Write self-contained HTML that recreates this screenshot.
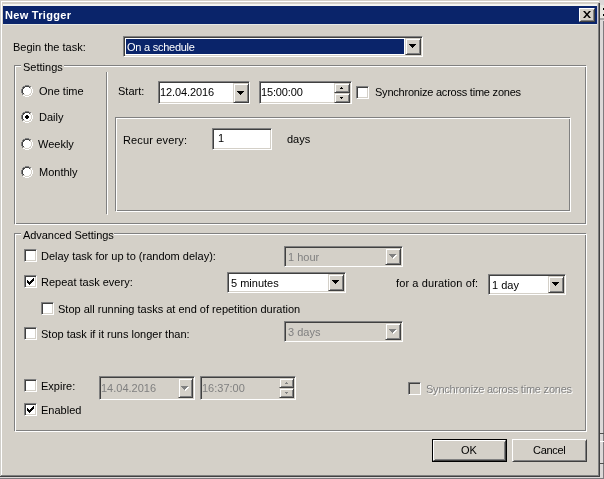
<!DOCTYPE html>
<html><head><meta charset="utf-8"><style>
html,body{margin:0;padding:0;width:604px;height:479px;overflow:hidden;background:#d4d0c8}
body>div,body>svg{position:absolute;box-sizing:border-box}
.t{font-family:"Liberation Sans",sans-serif;font-size:11px;line-height:13px;white-space:nowrap;color:#000;will-change:transform}
.sk{border:1px solid;border-color:#808080 #fff #fff #808080;box-shadow:inset 1px 1px 0 #404040,inset -1px -1px 0 #d4d0c8}
.rs{background:#d4d0c8;border:1px solid;border-color:#d4d0c8 #404040 #404040 #d4d0c8;box-shadow:inset 1px 1px 0 #fff,inset -1px -1px 0 #808080}
.bt{background:#d4d0c8;border:1px solid;border-color:#fff #404040 #404040 #fff;box-shadow:inset 1px 1px 0 #d4d0c8,inset -1px -1px 0 #808080}
</style></head><body>
<div style="left:0px;top:0px;width:604px;height:479px;background:#dcd8d8;"></div>
<div style="left:0px;top:0px;width:600px;height:477px;background:#d4d0c8;"></div>
<div style="left:0px;top:0px;width:600px;height:1px;background:#d4d0c8;"></div>
<div style="left:0px;top:1px;width:599px;height:1px;background:#ffffff;"></div>
<div style="left:0px;top:0px;width:1px;height:477px;background:#d0cec9;"></div>
<div style="left:1px;top:1px;width:1px;height:475px;background:#ffffff;"></div>
<div style="left:3px;top:4px;width:594px;height:2px;background:#f4f4f0;"></div>
<div style="left:598px;top:3px;width:1px;height:473px;background:#808080;"></div>
<div style="left:599px;top:3px;width:1px;height:474px;background:#404040;"></div>
<div style="left:597px;top:6px;width:1px;height:18px;background:#c8c8e0;"></div>
<div style="left:1px;top:475px;width:598px;height:1px;background:#808080;"></div>
<div style="left:0px;top:476px;width:600px;height:1px;background:#404040;"></div>
<div style="left:603px;top:21px;width:1px;height:458px;background:#7f7b7f;"></div>
<div style="left:0px;top:478px;width:604px;height:1px;background:#7f7b7f;"></div>
<div style="left:600px;top:5px;width:4px;height:13px;background:#e8e6e0;"></div>
<div style="left:600px;top:18px;width:4px;height:2px;background:#a8a8a8;"></div>
<div style="left:603px;top:8px;width:1px;height:2px;background:#000;"></div>
<div style="left:603px;top:14px;width:1px;height:2px;background:#000;"></div>
<div style="left:600px;top:433px;width:4px;height:1px;background:#505050;"></div>
<div style="left:600px;top:441px;width:4px;height:1px;background:#fff;"></div>
<div style="left:600px;top:463px;width:4px;height:1px;background:#505050;"></div>
<div style="left:3px;top:6px;width:594px;height:18px;background:#0a246a;"></div>
<div style="left:3px;top:24px;width:594px;height:1px;background:#e6e8e4;"></div>
<div class="t" style="left:5px;top:9px;color:#fff;font-weight:bold;letter-spacing:0.3px">New Trigger</div>
<div class="bt" style="left:579px;top:8px;width:16px;height:14px"></div>
<svg style="left:583px;top:11px" width="8" height="7"><path d="M0 0h2l2 2.5L6 0h2L5 3.5L8 7H6L4 4.5L2 7H0l3-3.5z" fill="#000"/></svg>
<div class="t" style="left:13px;top:41px;color:#000;">Begin the task:</div>
<div class="sk" style="left:123px;top:36px;width:300px;height:21px;background:#fff"></div>
<div class="rs" style="left:405px;top:38px;width:16px;height:17px"></div>
<svg style="left:409px;top:44px" width="7" height="4" shape-rendering="crispEdges"><rect x="0" y="0" width="7" height="1" fill="#000"/><rect x="1" y="1" width="5" height="1" fill="#000"/><rect x="2" y="2" width="3" height="1" fill="#000"/><rect x="3" y="3" width="1" height="1" fill="#000"/></svg>
<div style="left:126px;top:39px;width:278px;height:15px;background:#0a246a;"></div>
<div class="t" style="left:127px;top:41px;color:#fff;letter-spacing:-0.25px">On a schedule</div>
<div style="left:14px;top:65px;width:572px;height:159px;border:1px solid #808080;box-sizing:border-box"></div>
<div style="left:15px;top:66px;width:572px;height:159px;border:1px solid #ffffff;box-sizing:border-box"></div>
<div style="left:21px;top:62px;width:43px;height:6px;background:#d4d0c8;"></div>
<div class="t" style="left:23px;top:61px;color:#000;">Settings</div>
<div style="left:106px;top:72px;width:1px;height:142px;background:#808080;"></div>
<div style="left:107px;top:72px;width:1px;height:143px;background:#ffffff;"></div>
<svg style="left:21px;top:85px" width="12" height="12" shape-rendering="crispEdges"><rect x="4" y="0" width="4" height="1" fill="#808080"/><rect x="2" y="1" width="2" height="1" fill="#808080"/><rect x="4" y="1" width="4" height="1" fill="#404040"/><rect x="8" y="1" width="2" height="1" fill="#808080"/><rect x="1" y="2" width="1" height="1" fill="#808080"/><rect x="2" y="2" width="2" height="1" fill="#404040"/><rect x="4" y="2" width="4" height="1" fill="#fff"/><rect x="8" y="2" width="1" height="1" fill="#404040"/><rect x="9" y="2" width="1" height="1" fill="#d4d0c8"/><rect x="10" y="2" width="1" height="1" fill="#fff"/><rect x="1" y="3" width="1" height="1" fill="#808080"/><rect x="2" y="3" width="1" height="1" fill="#404040"/><rect x="3" y="3" width="6" height="1" fill="#fff"/><rect x="9" y="3" width="1" height="1" fill="#d4d0c8"/><rect x="10" y="3" width="1" height="1" fill="#fff"/><rect x="0" y="4" width="1" height="1" fill="#808080"/><rect x="1" y="4" width="1" height="1" fill="#404040"/><rect x="2" y="4" width="8" height="1" fill="#fff"/><rect x="10" y="4" width="1" height="1" fill="#d4d0c8"/><rect x="11" y="4" width="1" height="1" fill="#fff"/><rect x="0" y="5" width="1" height="1" fill="#808080"/><rect x="1" y="5" width="1" height="1" fill="#404040"/><rect x="2" y="5" width="8" height="1" fill="#fff"/><rect x="10" y="5" width="1" height="1" fill="#d4d0c8"/><rect x="11" y="5" width="1" height="1" fill="#fff"/><rect x="0" y="6" width="1" height="1" fill="#808080"/><rect x="1" y="6" width="1" height="1" fill="#404040"/><rect x="2" y="6" width="8" height="1" fill="#fff"/><rect x="10" y="6" width="1" height="1" fill="#d4d0c8"/><rect x="11" y="6" width="1" height="1" fill="#fff"/><rect x="0" y="7" width="1" height="1" fill="#808080"/><rect x="1" y="7" width="1" height="1" fill="#404040"/><rect x="2" y="7" width="8" height="1" fill="#fff"/><rect x="10" y="7" width="1" height="1" fill="#d4d0c8"/><rect x="11" y="7" width="1" height="1" fill="#fff"/><rect x="1" y="8" width="1" height="1" fill="#808080"/><rect x="2" y="8" width="1" height="1" fill="#404040"/><rect x="3" y="8" width="6" height="1" fill="#fff"/><rect x="9" y="8" width="1" height="1" fill="#d4d0c8"/><rect x="10" y="8" width="1" height="1" fill="#fff"/><rect x="1" y="9" width="1" height="1" fill="#808080"/><rect x="2" y="9" width="2" height="1" fill="#d4d0c8"/><rect x="4" y="9" width="4" height="1" fill="#fff"/><rect x="8" y="9" width="2" height="1" fill="#d4d0c8"/><rect x="10" y="9" width="1" height="1" fill="#fff"/><rect x="2" y="10" width="2" height="1" fill="#fff"/><rect x="4" y="10" width="4" height="1" fill="#d4d0c8"/><rect x="8" y="10" width="2" height="1" fill="#fff"/><rect x="4" y="11" width="4" height="1" fill="#fff"/></svg>
<div class="t" style="left:39px;top:85px;color:#000;">One time</div>
<svg style="left:21px;top:111px" width="12" height="12" shape-rendering="crispEdges"><rect x="4" y="0" width="4" height="1" fill="#808080"/><rect x="2" y="1" width="2" height="1" fill="#808080"/><rect x="4" y="1" width="4" height="1" fill="#404040"/><rect x="8" y="1" width="2" height="1" fill="#808080"/><rect x="1" y="2" width="1" height="1" fill="#808080"/><rect x="2" y="2" width="2" height="1" fill="#404040"/><rect x="4" y="2" width="4" height="1" fill="#fff"/><rect x="8" y="2" width="1" height="1" fill="#404040"/><rect x="9" y="2" width="1" height="1" fill="#d4d0c8"/><rect x="10" y="2" width="1" height="1" fill="#fff"/><rect x="1" y="3" width="1" height="1" fill="#808080"/><rect x="2" y="3" width="1" height="1" fill="#404040"/><rect x="3" y="3" width="6" height="1" fill="#fff"/><rect x="9" y="3" width="1" height="1" fill="#d4d0c8"/><rect x="10" y="3" width="1" height="1" fill="#fff"/><rect x="0" y="4" width="1" height="1" fill="#808080"/><rect x="1" y="4" width="1" height="1" fill="#404040"/><rect x="2" y="4" width="3" height="1" fill="#fff"/><rect x="5" y="4" width="2" height="1" fill="#000"/><rect x="7" y="4" width="3" height="1" fill="#fff"/><rect x="10" y="4" width="1" height="1" fill="#d4d0c8"/><rect x="11" y="4" width="1" height="1" fill="#fff"/><rect x="0" y="5" width="1" height="1" fill="#808080"/><rect x="1" y="5" width="1" height="1" fill="#404040"/><rect x="2" y="5" width="2" height="1" fill="#fff"/><rect x="4" y="5" width="4" height="1" fill="#000"/><rect x="8" y="5" width="2" height="1" fill="#fff"/><rect x="10" y="5" width="1" height="1" fill="#d4d0c8"/><rect x="11" y="5" width="1" height="1" fill="#fff"/><rect x="0" y="6" width="1" height="1" fill="#808080"/><rect x="1" y="6" width="1" height="1" fill="#404040"/><rect x="2" y="6" width="2" height="1" fill="#fff"/><rect x="4" y="6" width="4" height="1" fill="#000"/><rect x="8" y="6" width="2" height="1" fill="#fff"/><rect x="10" y="6" width="1" height="1" fill="#d4d0c8"/><rect x="11" y="6" width="1" height="1" fill="#fff"/><rect x="0" y="7" width="1" height="1" fill="#808080"/><rect x="1" y="7" width="1" height="1" fill="#404040"/><rect x="2" y="7" width="3" height="1" fill="#fff"/><rect x="5" y="7" width="2" height="1" fill="#000"/><rect x="7" y="7" width="3" height="1" fill="#fff"/><rect x="10" y="7" width="1" height="1" fill="#d4d0c8"/><rect x="11" y="7" width="1" height="1" fill="#fff"/><rect x="1" y="8" width="1" height="1" fill="#808080"/><rect x="2" y="8" width="1" height="1" fill="#404040"/><rect x="3" y="8" width="6" height="1" fill="#fff"/><rect x="9" y="8" width="1" height="1" fill="#d4d0c8"/><rect x="10" y="8" width="1" height="1" fill="#fff"/><rect x="1" y="9" width="1" height="1" fill="#808080"/><rect x="2" y="9" width="2" height="1" fill="#d4d0c8"/><rect x="4" y="9" width="4" height="1" fill="#fff"/><rect x="8" y="9" width="2" height="1" fill="#d4d0c8"/><rect x="10" y="9" width="1" height="1" fill="#fff"/><rect x="2" y="10" width="2" height="1" fill="#fff"/><rect x="4" y="10" width="4" height="1" fill="#d4d0c8"/><rect x="8" y="10" width="2" height="1" fill="#fff"/><rect x="4" y="11" width="4" height="1" fill="#fff"/></svg>
<div class="t" style="left:39px;top:111px;color:#000;">Daily</div>
<svg style="left:21px;top:138px" width="12" height="12" shape-rendering="crispEdges"><rect x="4" y="0" width="4" height="1" fill="#808080"/><rect x="2" y="1" width="2" height="1" fill="#808080"/><rect x="4" y="1" width="4" height="1" fill="#404040"/><rect x="8" y="1" width="2" height="1" fill="#808080"/><rect x="1" y="2" width="1" height="1" fill="#808080"/><rect x="2" y="2" width="2" height="1" fill="#404040"/><rect x="4" y="2" width="4" height="1" fill="#fff"/><rect x="8" y="2" width="1" height="1" fill="#404040"/><rect x="9" y="2" width="1" height="1" fill="#d4d0c8"/><rect x="10" y="2" width="1" height="1" fill="#fff"/><rect x="1" y="3" width="1" height="1" fill="#808080"/><rect x="2" y="3" width="1" height="1" fill="#404040"/><rect x="3" y="3" width="6" height="1" fill="#fff"/><rect x="9" y="3" width="1" height="1" fill="#d4d0c8"/><rect x="10" y="3" width="1" height="1" fill="#fff"/><rect x="0" y="4" width="1" height="1" fill="#808080"/><rect x="1" y="4" width="1" height="1" fill="#404040"/><rect x="2" y="4" width="8" height="1" fill="#fff"/><rect x="10" y="4" width="1" height="1" fill="#d4d0c8"/><rect x="11" y="4" width="1" height="1" fill="#fff"/><rect x="0" y="5" width="1" height="1" fill="#808080"/><rect x="1" y="5" width="1" height="1" fill="#404040"/><rect x="2" y="5" width="8" height="1" fill="#fff"/><rect x="10" y="5" width="1" height="1" fill="#d4d0c8"/><rect x="11" y="5" width="1" height="1" fill="#fff"/><rect x="0" y="6" width="1" height="1" fill="#808080"/><rect x="1" y="6" width="1" height="1" fill="#404040"/><rect x="2" y="6" width="8" height="1" fill="#fff"/><rect x="10" y="6" width="1" height="1" fill="#d4d0c8"/><rect x="11" y="6" width="1" height="1" fill="#fff"/><rect x="0" y="7" width="1" height="1" fill="#808080"/><rect x="1" y="7" width="1" height="1" fill="#404040"/><rect x="2" y="7" width="8" height="1" fill="#fff"/><rect x="10" y="7" width="1" height="1" fill="#d4d0c8"/><rect x="11" y="7" width="1" height="1" fill="#fff"/><rect x="1" y="8" width="1" height="1" fill="#808080"/><rect x="2" y="8" width="1" height="1" fill="#404040"/><rect x="3" y="8" width="6" height="1" fill="#fff"/><rect x="9" y="8" width="1" height="1" fill="#d4d0c8"/><rect x="10" y="8" width="1" height="1" fill="#fff"/><rect x="1" y="9" width="1" height="1" fill="#808080"/><rect x="2" y="9" width="2" height="1" fill="#d4d0c8"/><rect x="4" y="9" width="4" height="1" fill="#fff"/><rect x="8" y="9" width="2" height="1" fill="#d4d0c8"/><rect x="10" y="9" width="1" height="1" fill="#fff"/><rect x="2" y="10" width="2" height="1" fill="#fff"/><rect x="4" y="10" width="4" height="1" fill="#d4d0c8"/><rect x="8" y="10" width="2" height="1" fill="#fff"/><rect x="4" y="11" width="4" height="1" fill="#fff"/></svg>
<div class="t" style="left:38px;top:138px;color:#000;">Weekly</div>
<svg style="left:21px;top:166px" width="12" height="12" shape-rendering="crispEdges"><rect x="4" y="0" width="4" height="1" fill="#808080"/><rect x="2" y="1" width="2" height="1" fill="#808080"/><rect x="4" y="1" width="4" height="1" fill="#404040"/><rect x="8" y="1" width="2" height="1" fill="#808080"/><rect x="1" y="2" width="1" height="1" fill="#808080"/><rect x="2" y="2" width="2" height="1" fill="#404040"/><rect x="4" y="2" width="4" height="1" fill="#fff"/><rect x="8" y="2" width="1" height="1" fill="#404040"/><rect x="9" y="2" width="1" height="1" fill="#d4d0c8"/><rect x="10" y="2" width="1" height="1" fill="#fff"/><rect x="1" y="3" width="1" height="1" fill="#808080"/><rect x="2" y="3" width="1" height="1" fill="#404040"/><rect x="3" y="3" width="6" height="1" fill="#fff"/><rect x="9" y="3" width="1" height="1" fill="#d4d0c8"/><rect x="10" y="3" width="1" height="1" fill="#fff"/><rect x="0" y="4" width="1" height="1" fill="#808080"/><rect x="1" y="4" width="1" height="1" fill="#404040"/><rect x="2" y="4" width="8" height="1" fill="#fff"/><rect x="10" y="4" width="1" height="1" fill="#d4d0c8"/><rect x="11" y="4" width="1" height="1" fill="#fff"/><rect x="0" y="5" width="1" height="1" fill="#808080"/><rect x="1" y="5" width="1" height="1" fill="#404040"/><rect x="2" y="5" width="8" height="1" fill="#fff"/><rect x="10" y="5" width="1" height="1" fill="#d4d0c8"/><rect x="11" y="5" width="1" height="1" fill="#fff"/><rect x="0" y="6" width="1" height="1" fill="#808080"/><rect x="1" y="6" width="1" height="1" fill="#404040"/><rect x="2" y="6" width="8" height="1" fill="#fff"/><rect x="10" y="6" width="1" height="1" fill="#d4d0c8"/><rect x="11" y="6" width="1" height="1" fill="#fff"/><rect x="0" y="7" width="1" height="1" fill="#808080"/><rect x="1" y="7" width="1" height="1" fill="#404040"/><rect x="2" y="7" width="8" height="1" fill="#fff"/><rect x="10" y="7" width="1" height="1" fill="#d4d0c8"/><rect x="11" y="7" width="1" height="1" fill="#fff"/><rect x="1" y="8" width="1" height="1" fill="#808080"/><rect x="2" y="8" width="1" height="1" fill="#404040"/><rect x="3" y="8" width="6" height="1" fill="#fff"/><rect x="9" y="8" width="1" height="1" fill="#d4d0c8"/><rect x="10" y="8" width="1" height="1" fill="#fff"/><rect x="1" y="9" width="1" height="1" fill="#808080"/><rect x="2" y="9" width="2" height="1" fill="#d4d0c8"/><rect x="4" y="9" width="4" height="1" fill="#fff"/><rect x="8" y="9" width="2" height="1" fill="#d4d0c8"/><rect x="10" y="9" width="1" height="1" fill="#fff"/><rect x="2" y="10" width="2" height="1" fill="#fff"/><rect x="4" y="10" width="4" height="1" fill="#d4d0c8"/><rect x="8" y="10" width="2" height="1" fill="#fff"/><rect x="4" y="11" width="4" height="1" fill="#fff"/></svg>
<div class="t" style="left:39px;top:166px;color:#000;">Monthly</div>
<div class="t" style="left:118px;top:85px;color:#000;">Start:</div>
<div class="sk" style="left:158px;top:81px;width:92px;height:23px;background:#fff"></div>
<div class="rs" style="left:233px;top:83px;width:16px;height:20px"></div>
<svg style="left:237px;top:91px" width="7" height="4" shape-rendering="crispEdges"><rect x="0" y="0" width="7" height="1" fill="#000"/><rect x="1" y="1" width="5" height="1" fill="#000"/><rect x="2" y="2" width="3" height="1" fill="#000"/><rect x="3" y="3" width="1" height="1" fill="#000"/></svg>
<div class="t" style="left:160px;top:86px;color:#000;letter-spacing:-0.1px">12.04.2016</div>
<div class="sk" style="left:259px;top:81px;width:93px;height:23px;background:#fff"></div>
<div class="rs" style="left:334px;top:83px;width:16px;height:10px"></div>
<div class="rs" style="left:334px;top:93px;width:16px;height:10px"></div>
<svg style="left:340px;top:87px" width="3" height="2" shape-rendering="crispEdges"><rect x="1" y="0" width="1" height="1" fill="#000"/><rect x="0" y="1" width="3" height="1" fill="#000"/></svg>
<svg style="left:340px;top:97px" width="3" height="2" shape-rendering="crispEdges"><rect x="0" y="0" width="3" height="1" fill="#000"/><rect x="1" y="1" width="1" height="1" fill="#000"/></svg>
<div class="t" style="left:261px;top:86px;color:#000;letter-spacing:-0.15px">15:00:00</div>
<div class="sk" style="left:356px;top:86px;width:13px;height:13px;background:#fff"></div>
<div class="t" style="left:375px;top:86px;color:#000;letter-spacing:-0.22px">Synchronize across time zones</div>
<div style="left:115px;top:117px;width:455px;height:94px;border:1px solid #808080;box-sizing:border-box"></div>
<div style="left:116px;top:118px;width:455px;height:94px;border:1px solid #ffffff;box-sizing:border-box"></div>
<div class="t" style="left:123px;top:134px;color:#000;letter-spacing:0.15px">Recur every:</div>
<div class="sk" style="left:212px;top:128px;width:60px;height:22px;background:#fff"></div>
<div class="t" style="left:218px;top:132px;color:#000;">1</div>
<div class="t" style="left:287px;top:133px;color:#000;">days</div>
<div style="left:14px;top:233px;width:572px;height:198px;border:1px solid #808080;box-sizing:border-box"></div>
<div style="left:15px;top:234px;width:572px;height:198px;border:1px solid #ffffff;box-sizing:border-box"></div>
<div style="left:21px;top:230px;width:93px;height:6px;background:#d4d0c8;"></div>
<div class="t" style="left:23px;top:229px;color:#000;letter-spacing:-0.06px">Advanced Settings</div>
<div class="sk" style="left:24px;top:249px;width:13px;height:13px;background:#fff"></div>
<div class="t" style="left:41px;top:250px;color:#000;">Delay task for up to (random delay):</div>
<div class="sk" style="left:284px;top:246px;width:119px;height:21px;background:#d4d0c8"></div>
<div class="rs" style="left:385px;top:248px;width:16px;height:17px"></div>
<svg style="left:390px;top:255px" width="7" height="4" shape-rendering="crispEdges"><rect x="0" y="0" width="7" height="1" fill="#fff"/><rect x="1" y="1" width="5" height="1" fill="#fff"/><rect x="2" y="2" width="3" height="1" fill="#fff"/><rect x="3" y="3" width="1" height="1" fill="#fff"/></svg>
<svg style="left:389px;top:254px" width="7" height="4" shape-rendering="crispEdges"><rect x="0" y="0" width="7" height="1" fill="#808080"/><rect x="1" y="1" width="5" height="1" fill="#808080"/><rect x="2" y="2" width="3" height="1" fill="#808080"/><rect x="3" y="3" width="1" height="1" fill="#808080"/></svg>
<div class="t" style="left:288px;top:251px;color:#808080;">1 hour</div>
<div class="sk" style="left:24px;top:275px;width:13px;height:13px;background:#fff"></div>
<svg style="left:27px;top:278px" width="7" height="7" shape-rendering="crispEdges"><rect x="6" y="0" width="1" height="1" fill="#000"/><rect x="5" y="1" width="2" height="1" fill="#000"/><rect x="0" y="2" width="1" height="1" fill="#000"/><rect x="4" y="2" width="3" height="1" fill="#000"/><rect x="0" y="3" width="2" height="1" fill="#000"/><rect x="3" y="3" width="3" height="1" fill="#000"/><rect x="0" y="4" width="5" height="1" fill="#000"/><rect x="1" y="5" width="3" height="1" fill="#000"/><rect x="2" y="6" width="1" height="1" fill="#000"/></svg>
<div class="t" style="left:41px;top:276px;color:#000;">Repeat task every:</div>
<div class="sk" style="left:227px;top:272px;width:119px;height:21px;background:#fff"></div>
<div class="rs" style="left:328px;top:274px;width:16px;height:17px"></div>
<svg style="left:332px;top:280px" width="7" height="4" shape-rendering="crispEdges"><rect x="0" y="0" width="7" height="1" fill="#000"/><rect x="1" y="1" width="5" height="1" fill="#000"/><rect x="2" y="2" width="3" height="1" fill="#000"/><rect x="3" y="3" width="1" height="1" fill="#000"/></svg>
<div class="t" style="left:231px;top:277px;color:#000;">5 minutes</div>
<div class="t" style="left:396px;top:277px;color:#000;letter-spacing:0.12px">for a duration of:</div>
<div class="sk" style="left:488px;top:274px;width:78px;height:21px;background:#fff"></div>
<div class="rs" style="left:548px;top:276px;width:16px;height:17px"></div>
<svg style="left:552px;top:282px" width="7" height="4" shape-rendering="crispEdges"><rect x="0" y="0" width="7" height="1" fill="#000"/><rect x="1" y="1" width="5" height="1" fill="#000"/><rect x="2" y="2" width="3" height="1" fill="#000"/><rect x="3" y="3" width="1" height="1" fill="#000"/></svg>
<div class="t" style="left:492px;top:279px;color:#000;">1 day</div>
<div class="sk" style="left:41px;top:302px;width:13px;height:13px;background:#fff"></div>
<div class="t" style="left:58px;top:303px;color:#000;">Stop all running tasks at end of repetition duration</div>
<div class="sk" style="left:24px;top:327px;width:13px;height:13px;background:#fff"></div>
<div class="t" style="left:41px;top:328px;color:#000;">Stop task if it runs longer than:</div>
<div class="sk" style="left:284px;top:321px;width:119px;height:21px;background:#d4d0c8"></div>
<div class="rs" style="left:385px;top:323px;width:16px;height:17px"></div>
<svg style="left:390px;top:330px" width="7" height="4" shape-rendering="crispEdges"><rect x="0" y="0" width="7" height="1" fill="#fff"/><rect x="1" y="1" width="5" height="1" fill="#fff"/><rect x="2" y="2" width="3" height="1" fill="#fff"/><rect x="3" y="3" width="1" height="1" fill="#fff"/></svg>
<svg style="left:389px;top:329px" width="7" height="4" shape-rendering="crispEdges"><rect x="0" y="0" width="7" height="1" fill="#808080"/><rect x="1" y="1" width="5" height="1" fill="#808080"/><rect x="2" y="2" width="3" height="1" fill="#808080"/><rect x="3" y="3" width="1" height="1" fill="#808080"/></svg>
<div class="t" style="left:288px;top:326px;color:#808080;">3 days</div>
<div class="sk" style="left:24px;top:379px;width:13px;height:13px;background:#fff"></div>
<div class="t" style="left:41px;top:380px;color:#000;">Expire:</div>
<div class="sk" style="left:99px;top:376px;width:96px;height:24px;background:#d4d0c8"></div>
<div class="rs" style="left:178px;top:378px;width:15px;height:20px"></div>
<svg style="left:182px;top:387px" width="7" height="4" shape-rendering="crispEdges"><rect x="0" y="0" width="7" height="1" fill="#fff"/><rect x="1" y="1" width="5" height="1" fill="#fff"/><rect x="2" y="2" width="3" height="1" fill="#fff"/><rect x="3" y="3" width="1" height="1" fill="#fff"/></svg>
<svg style="left:181px;top:386px" width="7" height="4" shape-rendering="crispEdges"><rect x="0" y="0" width="7" height="1" fill="#808080"/><rect x="1" y="1" width="5" height="1" fill="#808080"/><rect x="2" y="2" width="3" height="1" fill="#808080"/><rect x="3" y="3" width="1" height="1" fill="#808080"/></svg>
<div class="t" style="left:101px;top:382px;color:#808080;">14.04.2016</div>
<div class="sk" style="left:200px;top:376px;width:96px;height:24px;background:#d4d0c8"></div>
<div class="rs" style="left:279px;top:378px;width:15px;height:10px"></div>
<div class="rs" style="left:279px;top:388px;width:15px;height:10px"></div>
<svg style="left:285px;top:382px" width="3" height="2" shape-rendering="crispEdges"><rect x="1" y="0" width="1" height="1" fill="#808080"/><rect x="0" y="1" width="3" height="1" fill="#808080"/></svg>
<svg style="left:285px;top:392px" width="3" height="2" shape-rendering="crispEdges"><rect x="0" y="0" width="3" height="1" fill="#808080"/><rect x="1" y="1" width="1" height="1" fill="#808080"/></svg>
<div class="t" style="left:202px;top:382px;color:#808080;">16:37:00</div>
<div class="sk" style="left:408px;top:382px;width:13px;height:13px;background:#d4d0c8"></div>
<div class="t" style="left:427px;top:384px;color:#fff;letter-spacing:-0.22px">Synchronize across time zones</div>
<div class="t" style="left:426px;top:383px;color:#808080;letter-spacing:-0.22px">Synchronize across time zones</div>
<div class="sk" style="left:24px;top:403px;width:13px;height:13px;background:#fff"></div>
<svg style="left:27px;top:406px" width="7" height="7" shape-rendering="crispEdges"><rect x="6" y="0" width="1" height="1" fill="#000"/><rect x="5" y="1" width="2" height="1" fill="#000"/><rect x="0" y="2" width="1" height="1" fill="#000"/><rect x="4" y="2" width="3" height="1" fill="#000"/><rect x="0" y="3" width="2" height="1" fill="#000"/><rect x="3" y="3" width="3" height="1" fill="#000"/><rect x="0" y="4" width="5" height="1" fill="#000"/><rect x="1" y="5" width="3" height="1" fill="#000"/><rect x="2" y="6" width="1" height="1" fill="#000"/></svg>
<div class="t" style="left:41px;top:404px;color:#000;">Enabled</div>
<div style="left:432px;top:439px;width:75px;height:23px;border:1px solid #000;box-sizing:border-box"></div>
<div class="bt" style="left:433px;top:440px;width:73px;height:21px"></div>
<div class="t" style="left:461px;top:444px;color:#000;">OK</div>
<div class="bt" style="left:512px;top:439px;width:75px;height:23px"></div>
<div class="t" style="left:533px;top:444px;color:#000;letter-spacing:-0.3px">Cancel</div>
</body></html>
